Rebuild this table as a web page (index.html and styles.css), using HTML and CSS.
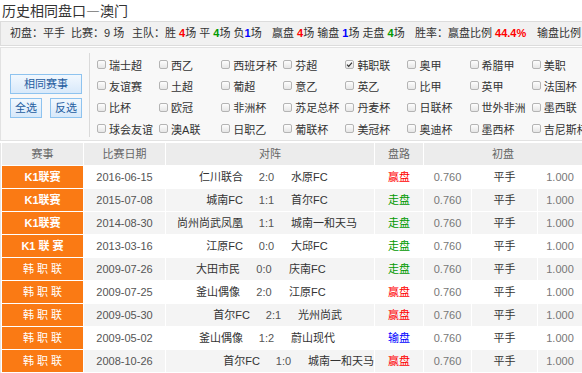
FILE: index.html
```html
<!DOCTYPE html>
<html lang="zh-CN">
<head>
<meta charset="utf-8">
<title>历史相同盘口—澳门</title>
<link rel="stylesheet" href="styles.css">
</head>
<body>
<div class="page">
  <div class="title">历史相同盘口—澳门</div>
  <div class="summary">
    <span class="g g1">初盘：平手</span>
    <span class="g g2">比赛：9 场</span>
    <span class="g g3">主队：胜 <b class="r">4</b>场 平 <b class="gr">4</b>场 负<b class="bl">1</b>场</span>
    <span class="g g4">赢盘 <b class="r">4</b>场 输盘 <b class="bl">1</b>场 走盘 <b class="gr">4</b>场</span>
    <span class="g g5">胜率：赢盘比例 <b class="r">44.4%</b></span>
    <span class="g g6">输盘比例</span>
  </div>
  <div class="filter">
    <div class="btns">
      <span class="btn wide">相同赛事</span>
      <div class="btn-row">
        <span class="btn">全选</span>
        <span class="btn">反选</span>
      </div>
    </div>
    <div class="leagues">
      <label class="lg"><span class="cb"></span>瑞士超</label>
      <label class="lg"><span class="cb"></span>西乙</label>
      <label class="lg"><span class="cb"></span>西班牙杯</label>
      <label class="lg"><span class="cb"></span>芬超</label>
      <label class="lg"><span class="cb on"><svg width="9" height="9" viewBox="0 0 9 9"><path d="M2 4.6 L3.7 6.4 L7 2.6" fill="none" stroke="#333" stroke-width="1.2"/></svg></span>韩职联</label>
      <label class="lg"><span class="cb"></span>奥甲</label>
      <label class="lg"><span class="cb"></span>希腊甲</label>
      <label class="lg"><span class="cb"></span>美职</label>

      <label class="lg"><span class="cb"></span>友谊赛</label>
      <label class="lg"><span class="cb"></span>土超</label>
      <label class="lg"><span class="cb"></span>葡超</label>
      <label class="lg"><span class="cb"></span>意乙</label>
      <label class="lg"><span class="cb"></span>英乙</label>
      <label class="lg"><span class="cb"></span>比甲</label>
      <label class="lg"><span class="cb"></span>英甲</label>
      <label class="lg"><span class="cb"></span>法国杯</label>

      <label class="lg"><span class="cb"></span>比杯</label>
      <label class="lg"><span class="cb"></span>欧冠</label>
      <label class="lg"><span class="cb"></span>非洲杯</label>
      <label class="lg"><span class="cb"></span>苏足总杯</label>
      <label class="lg"><span class="cb"></span>丹麦杯</label>
      <label class="lg"><span class="cb"></span>日联杯</label>
      <label class="lg"><span class="cb"></span>世外非洲</label>
      <label class="lg"><span class="cb"></span>墨西联</label>

      <label class="lg"><span class="cb"></span>球会友谊</label>
      <label class="lg"><span class="cb"></span>澳A联</label>
      <label class="lg"><span class="cb"></span>日职乙</label>
      <label class="lg"><span class="cb"></span>葡联杯</label>
      <label class="lg"><span class="cb"></span>美冠杯</label>
      <label class="lg"><span class="cb"></span>奥迪杯</label>
      <label class="lg"><span class="cb"></span>墨西杯</label>
      <label class="lg"><span class="cb"></span>吉尼斯杯</label>
    </div>
  </div>

  <table class="hist">
    <colgroup>
      <col class="c1"><col class="c2"><col class="c3"><col class="c4"><col class="c5"><col class="c6"><col class="c7">
    </colgroup>
    <thead>
      <tr><th class="first">赛事</th><th>比赛日期</th><th>对阵</th><th>盘路</th><th colspan="3">初盘</th></tr>
    </thead>
    <tbody>
      <tr class="w">
        <td class="lea k1">K1联赛</td><td class="date">2016-06-15</td>
        <td><div class="m"><span class="h">仁川联合</span><span class="s">2:0</span><span class="a">水原FC</span></div></td>
        <td class="res win">赢盘</td><td class="odd">0.760</td><td class="hc">平手</td><td class="odd">1.000</td>
      </tr>
      <tr class="gy">
        <td class="lea k1">K1联赛</td><td class="date">2015-07-08</td>
        <td><div class="m"><span class="h">城南FC</span><span class="s">1:1</span><span class="a">首尔FC</span></div></td>
        <td class="res draw">走盘</td><td class="odd">0.760</td><td class="hc">平手</td><td class="odd">1.000</td>
      </tr>
      <tr class="gy">
        <td class="lea k1">K1联赛</td><td class="date">2014-08-30</td>
        <td><div class="m"><span class="h">尚州尚武凤凰</span><span class="s">1:1</span><span class="a">城南一和天马</span></div></td>
        <td class="res draw">走盘</td><td class="odd">0.760</td><td class="hc">平手</td><td class="odd">1.000</td>
      </tr>
      <tr class="w">
        <td class="lea k1">K1 联 赛</td><td class="date">2013-03-16</td>
        <td><div class="m"><span class="h">江原FC</span><span class="s">0:0</span><span class="a">大邱FC</span></div></td>
        <td class="res draw">走盘</td><td class="odd">0.760</td><td class="hc">平手</td><td class="odd">1.000</td>
      </tr>
      <tr class="gy">
        <td class="lea">韩 职 联</td><td class="date">2009-07-26</td>
        <td><div class="m m-l"><span class="h">大田市民</span><span class="s">0:0</span><span class="a">庆南FC</span></div></td>
        <td class="res draw">走盘</td><td class="odd">0.760</td><td class="hc">平手</td><td class="odd">1.000</td>
      </tr>
      <tr class="w">
        <td class="lea">韩 职 联</td><td class="date">2009-07-25</td>
        <td><div class="m m-l"><span class="h">釜山偶像</span><span class="s">2:0</span><span class="a">江原FC</span></div></td>
        <td class="res win">赢盘</td><td class="odd">0.760</td><td class="hc">平手</td><td class="odd">1.000</td>
      </tr>
      <tr class="gy">
        <td class="lea">韩 职 联</td><td class="date">2009-05-30</td>
        <td><div class="m m-r1"><span class="h">首尔FC</span><span class="s">2:1</span><span class="a">光州尚武</span></div></td>
        <td class="res win">赢盘</td><td class="odd">0.760</td><td class="hc">平手</td><td class="odd">1.000</td>
      </tr>
      <tr class="w">
        <td class="lea">韩 职 联</td><td class="date">2009-05-02</td>
        <td><div class="m"><span class="h">釜山偶像</span><span class="s">1:2</span><span class="a">蔚山现代</span></div></td>
        <td class="res lose">输盘</td><td class="odd">0.760</td><td class="hc">平手</td><td class="odd">1.000</td>
      </tr>
      <tr class="gy">
        <td class="lea">韩 职 联</td><td class="date">2008-10-26</td>
        <td><div class="m m-r2"><span class="h">首尔FC</span><span class="s">1:0</span><span class="a">城南一和天马</span></div></td>
        <td class="res win">赢盘</td><td class="odd">0.760</td><td class="hc">平手</td><td class="odd">1.000</td>
      </tr>
    </tbody>
  </table>
</div>
</body>
</html>
```

FILE: styles.css
```css
html, body {
  margin: 0;
  padding: 0;
  overflow: hidden;
  background: #fff;
}
body {
  font-family: "Liberation Sans", "Noto Sans CJK SC", sans-serif;
  font-size: 11px;
  color: #333;
}
.page {
  width: 640px;
}
.title {
  height: 21px;
  line-height: 21px;
  padding-left: 2px;
  font-family: "Noto Sans CJK SC", sans-serif;
  font-size: 14px;
  color: #333;
}
.summary {
  display: flex;
  height: 23px;
  line-height: 23px;
  border: 1px solid #dcdcdc;
  background: #f1f1f1;
  padding-left: 9px;
  white-space: nowrap;
}
.g { flex: none; }
.g1 { width: 61px; }
.g2 { width: 61px; }
.g3 { width: 140px; }
.g4 { width: 143px; }
.g5 { width: 122px; }
.summary b { font-weight: bold; }
.r { color: #f00; }
.gr { color: #090; }
.bl { color: #00f; }

.filter {
  display: flex;
  margin-top: 1px;
  height: 92px;
  border: 1px solid #e2e2e2;
  background: #f8f8f8;
}
.btns {
  width: 79px;
  flex: none;
  margin: 5px 0 3px 0;
  padding-left: 9px;
  border-right: 1px solid #dadada;
  display: flex;
  flex-direction: column;
  justify-content: center;
  gap: 4px;
  padding-top: 1px;
}
.btn-row {
  display: flex;
  gap: 8px;
}
.btn {
  display: block;
  box-sizing: border-box;
  height: 20px;
  width: 32px;
  line-height: 18px;
  text-align: center;
  border: 1px solid #8ec3ef;
  background: linear-gradient(#f2f8fe, #d8e9fa);
  color: #245c9f;
  font-size: 11px;
}
.btn.wide { width: 72px; }

.leagues {
  display: grid;
  grid-template-columns: repeat(8, 62.1px);
  grid-auto-rows: 21.3px;
  padding: 6px 0 0 7px;
}
.lg {
  display: flex;
  align-items: center;
  white-space: nowrap;
  color: #333;
}
.cb {
  box-sizing: border-box;
  width: 9px;
  height: 9px;
  margin-right: 3px;
  border: 1px solid #b4b4b4;
  border-radius: 2px;
  background: linear-gradient(#fdfdfd, #e6e6e6);
  display: flex;
  align-items: center;
  justify-content: center;
  flex: none;
}
.cb svg { display: block; margin: -1px; }

.hist {
  margin-top: 2px;
  border-collapse: separate;
  border-spacing: 0;
  table-layout: fixed;
  width: 583px;
  border-left: 1px solid #e6e6e6;
}
.c1 { width: 83px; }
.c2 { width: 82px; }
.c3 { width: 209px; }
.c4 { width: 49px; }
.c5 { width: 48px; }
.c6 { width: 66px; }
.c7 { width: 45px; }
.hist th, .hist td {
  box-sizing: border-box;
  height: 23px;
  padding: 0;
  border-right: 1px solid #fff;
  border-bottom: 1px solid #fff;
  text-align: center;
  white-space: nowrap;
  overflow: hidden;
  line-height: 16px;
}
.hist th {
  background: #ececec;
  color: #666;
  font-weight: normal;
}
.hist th.first, .hist td.lea { border-left: 1px solid #fff; }
.hist tr.w td { background: #fff; }
.hist tr.gy td { background: #f4f4f4; }
.hist tr td.lea {
  background: #fa7a14;
  color: #fff;
}
.hist tr td.k1 { font-weight: bold; }
.date { color: #555; }
.m {
  display: grid;
  grid-template-columns: 77px 47px 1fr;
  align-items: baseline;
  text-align: left;
}
.m-l { grid-template-columns: 74px 48px 1fr; }
.m-r1 { padding-left: 7px; }
.m-r2 { padding-left: 17px; }
.h { text-align: right; }
.s { text-align: center; color: #555; }
.a { padding-left: 1px; }
.res.win { color: #f00; }
.res.draw { color: #090; }
.res.lose { color: #00f; }
.odd { color: #777; }
.hc { color: #333; }
```
